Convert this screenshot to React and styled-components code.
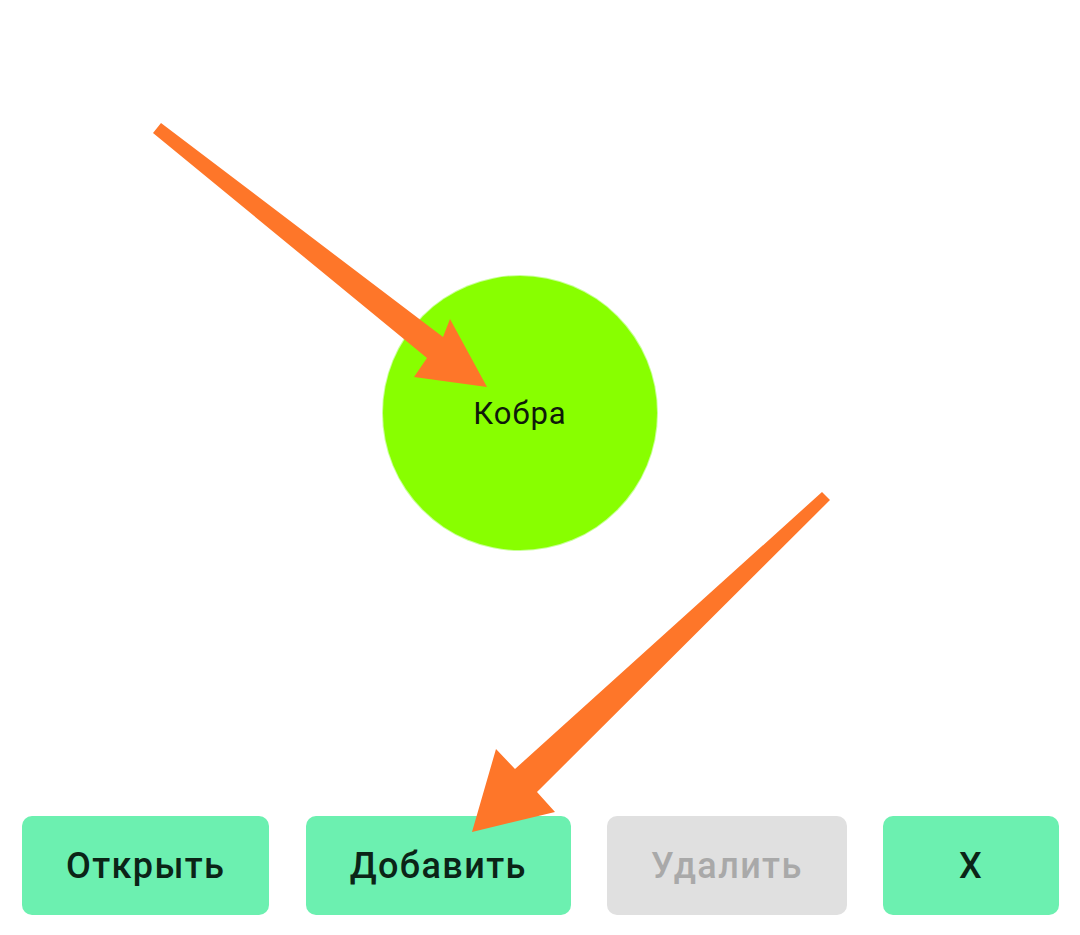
import styled, { createGlobalStyle } from 'styled-components'

const GlobalStyle = createGlobalStyle`
    html, body {
        margin: 0;
        padding: 0;
        background: #ffffff;
        font-family: Roboto, "Noto Sans", sans-serif;
    }
`

const Screen = styled.div`
    position: relative;
    display: flex;
    flex-direction: column;
    width: 1080px;
    height: 935px;
    background: #ffffff;
    overflow: hidden;
`

const Stage = styled.div`
    flex: 1;
    display: flex;
    justify-content: center;
    align-items: flex-start;
    padding-top: 276px;
    padding-right: 40px;
`

const Node = styled.div`
    width: 274px;
    height: 274px;
    border-radius: 50%;
    background: #88ff00;
    box-shadow: 0 0 0 1px #c9ff9a;
    display: flex;
    align-items: center;
    justify-content: center;
    color: #0f1a0a;
    font-size: 31px;
    font-weight: 400;
    letter-spacing: 1px;
`

const Toolbar = styled.div`
    display: flex;
    justify-content: space-between;
    padding: 0 21px 20px 22px;
`

const Button = styled.button`
    height: 99px;
    min-width: ${p => p.$wide || 0}px;
    padding: 0 44px;
    border: none;
    border-radius: 10px;
    font-family: Roboto, "Noto Sans", sans-serif;
    font-size: 36px;
    font-weight: 500;
    letter-spacing: 1.4px;
    background: ${p => p.disabled ? '#e0e0e0' : '#6cf0b0'};
    color: ${p => p.disabled ? '#a9a9a9' : '#0b2417'};
`

const Overlay = styled.svg`
    position: absolute;
    inset: 0;
    pointer-events: none;
`

function Arrows(){
    return (
        <Overlay width="1080" height="935" viewBox="0 0 1080 935">
            <polygon fill="#fe7629" points="153,133 427,358 414,377 487,387 450,319 443,337 161,123" />
            <polygon fill="#fe7629" points="822,492 515,769 496,749 472,832 555,812 537,792 830,500" />
        </Overlay>
    );
}

function App(){
    return (
        <>
            <GlobalStyle />
            <Screen>
                <Stage>
                    <Node>Кобра</Node>
                </Stage>
                <Toolbar>
                    <Button>Открыть</Button>
                    <Button>Добавить</Button>
                    <Button disabled>Удалить</Button>
                    <Button $wide={176}>X</Button>
                </Toolbar>
                <Arrows />
            </Screen>
        </>
    );
}

export default App;
